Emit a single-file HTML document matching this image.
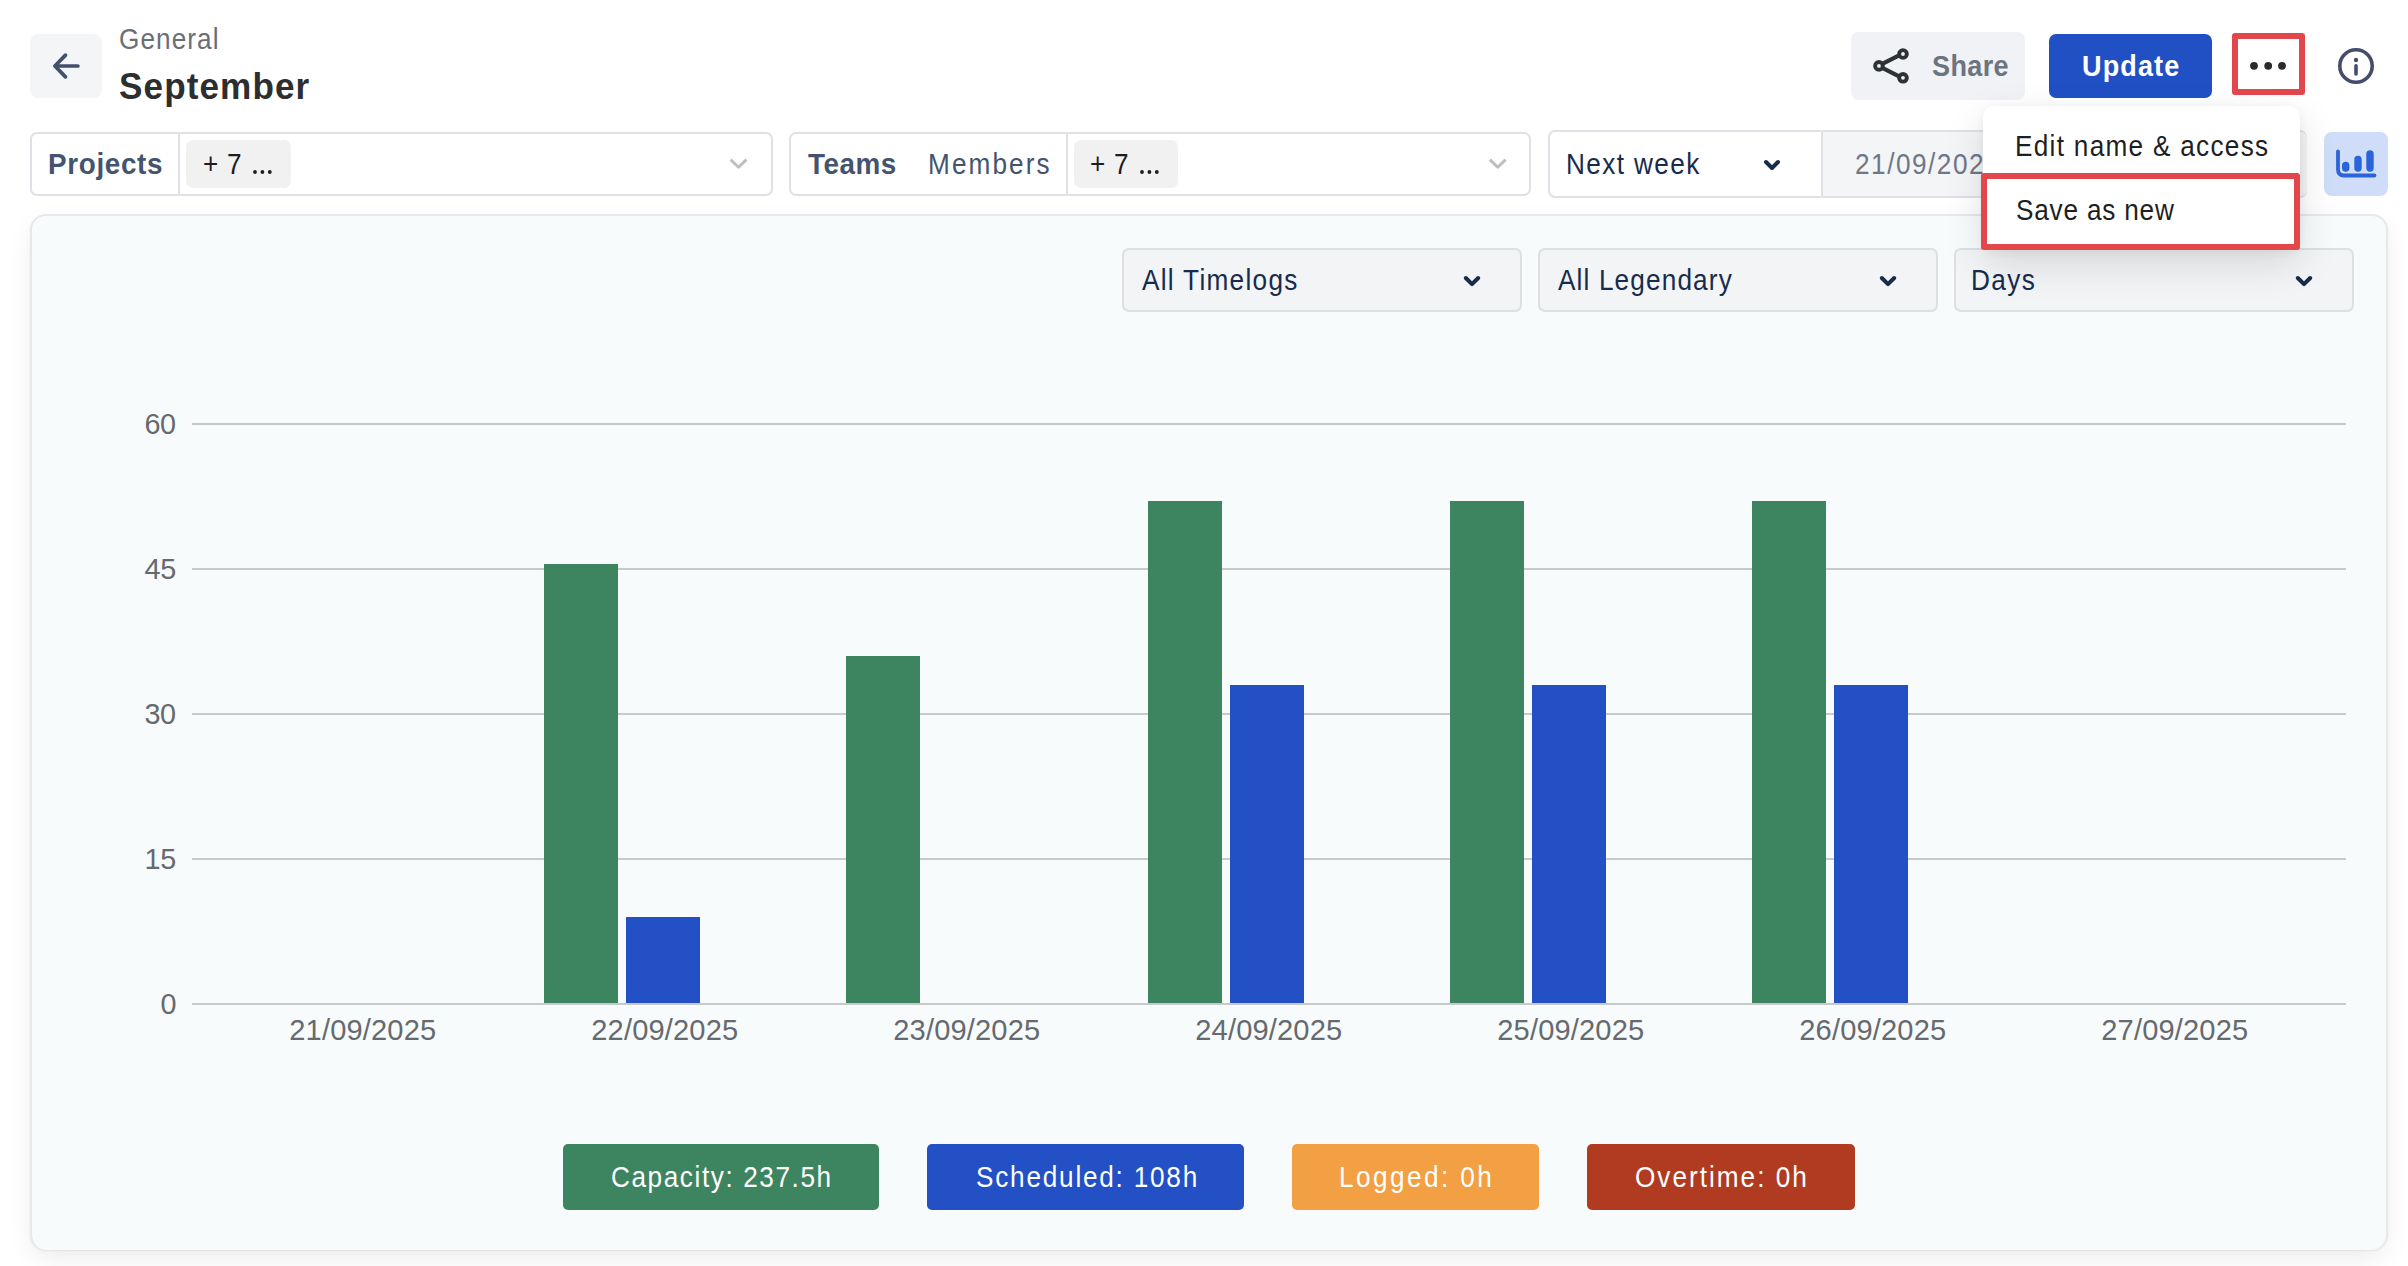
<!DOCTYPE html>
<html><head><meta charset="utf-8"><style>
html,body{margin:0;padding:0;}
body{width:2408px;height:1266px;overflow:hidden;background:#fff;position:relative;font-family:"Liberation Sans",sans-serif;}
.b{position:absolute;}
.t{position:absolute;line-height:1;white-space:pre;}
</style></head><body>
<div class="b" style="left:30px;top:34px;width:72px;height:64px;background:#F4F5F7;border-radius:8px;"></div>
<svg class="b" style="left:0;top:0" width="200" height="120"><path d="M77.9 66H56 M65.5 55.1L54.9 66L65.5 76.9" fill="none" stroke="#434F6E" stroke-width="3.7" stroke-linecap="round" stroke-linejoin="round"/></svg>
<div class="t" style="left:118.55px;top:24.59px;font-size:29.07px;letter-spacing:1.185px;color:#6B6E76;font-weight:400;transform:scaleX(0.9);transform-origin:0 0;">General</div>
<div class="t" style="left:118.88px;top:68.30px;font-size:37.79px;letter-spacing:1.163px;color:#2D2E30;font-weight:700;transform:scaleX(0.93);transform-origin:0 0;">September</div>
<div class="b" style="left:30px;top:132px;width:743px;height:64px;border:2px solid #DFE1E6;border-radius:7px;background:#fff;box-sizing:border-box;"></div>
<div class="b" style="left:178px;top:134px;width:2px;height:60px;background:#DFE1E6;"></div>
<div class="b" style="left:186px;top:140px;width:105px;height:48px;background:#F1F1F2;border-radius:7px;"></div>
<div class="t" style="left:47.64px;top:149.45px;font-size:29.94px;letter-spacing:0.713px;color:#44546F;font-weight:700;transform:scaleX(0.93);transform-origin:0 0;">Projects</div>
<div class="t" style="left:202.74px;top:149.99px;font-size:29.07px;letter-spacing:0.000px;color:#1D1D1F;font-weight:400;transform:scaleX(0.9);transform-origin:0 0;">+</div>
<div class="t" style="left:226.85px;top:149.99px;font-size:29.07px;letter-spacing:0.000px;color:#1D1D1F;font-weight:400;transform:scaleX(0.9);transform-origin:0 0;">7</div>
<svg class="b" style="left:250.1px;top:166.6px" width="30" height="10"><g fill="#1D1D1F"><circle cx="5" cy="5" r="1.9"/><circle cx="12.4" cy="5" r="1.9"/><circle cx="19.8" cy="5" r="1.9"/></g></svg>
<svg class="b" style="left:720px;top:150px" width="36" height="26"><path d="M10.6 9.6L18.5 17.2L26.4 9.6" fill="none" stroke="#BDBEC0" stroke-width="2.9" stroke-linecap="butt" stroke-linejoin="round"/></svg>
<div class="b" style="left:789px;top:132px;width:742px;height:64px;border:2px solid #DFE1E6;border-radius:7px;background:#fff;box-sizing:border-box;"></div>
<div class="b" style="left:1066px;top:134px;width:2px;height:60px;background:#DFE1E6;"></div>
<div class="b" style="left:1074px;top:140px;width:104px;height:48px;background:#F1F1F2;border-radius:7px;"></div>
<div class="t" style="left:808.42px;top:149.45px;font-size:29.94px;letter-spacing:0.585px;color:#44546F;font-weight:700;transform:scaleX(0.93);transform-origin:0 0;">Teams</div>
<div class="t" style="left:927.74px;top:150.19px;font-size:29.07px;letter-spacing:2.346px;color:#44546F;font-weight:400;transform:scaleX(0.9);transform-origin:0 0;">Members</div>
<div class="t" style="left:1089.94px;top:149.99px;font-size:29.07px;letter-spacing:0.000px;color:#1D1D1F;font-weight:400;transform:scaleX(0.9);transform-origin:0 0;">+</div>
<div class="t" style="left:1114.05px;top:149.99px;font-size:29.07px;letter-spacing:0.000px;color:#1D1D1F;font-weight:400;transform:scaleX(0.9);transform-origin:0 0;">7</div>
<svg class="b" style="left:1137.3px;top:166.6px" width="30" height="10"><g fill="#1D1D1F"><circle cx="5" cy="5" r="1.9"/><circle cx="12.4" cy="5" r="1.9"/><circle cx="19.8" cy="5" r="1.9"/></g></svg>
<svg class="b" style="left:1480px;top:150px" width="36" height="26"><path d="M9.8 9.6L17.7 17.2L25.6 9.6" fill="none" stroke="#BDBEC0" stroke-width="2.9" stroke-linecap="butt" stroke-linejoin="round"/></svg>
<div class="b" style="left:1548px;top:130px;width:759px;height:68px;border:2px solid #DFE1E6;border-radius:7px;background:#fff;box-sizing:border-box;overflow:hidden;"></div>
<div class="b" style="left:1821px;top:132px;width:484px;height:64px;background:#F4F5F7;border-left:2px solid #DFE1E6;border-radius:0 6px 6px 0;"></div>
<div class="t" style="left:1566.04px;top:149.99px;font-size:29.07px;letter-spacing:1.547px;color:#172B4D;font-weight:400;transform:scaleX(0.9);transform-origin:0 0;">Next week</div>
<svg class="b" style="left:1755px;top:150px" width="36" height="26"><path d="M11 12L17 18L23 12" fill="none" stroke="#172B4D" stroke-width="4" stroke-linecap="round" stroke-linejoin="round"/></svg>
<div class="t" style="left:1854.85px;top:149.99px;font-size:29.07px;letter-spacing:1.686px;color:#6E7789;font-weight:400;transform:scaleX(0.9);transform-origin:0 0;">21/09/2025 - 27/09/2025</div>
<div class="b" style="left:2324px;top:132px;width:64px;height:64px;background:#CFDDF8;border-radius:8px;"></div>
<svg class="b" style="left:2324px;top:132px" width="64" height="64"><path d="M14 19.5V37.5Q14 43.5 20 43.5H50.5" fill="none" stroke="#2B63D9" stroke-width="3.8" stroke-linecap="round" stroke-linejoin="round"/><path d="M21.7 33.5V36 M34 27.5V36 M46 22V36" fill="none" stroke="#2B63D9" stroke-width="7.4" stroke-linecap="round"/></svg>
<div class="b" style="left:1851px;top:32px;width:174px;height:68px;background:#F0F2F5;border-radius:8px;"></div>
<svg class="b" style="left:1860px;top:40px" width="60" height="52"><g fill="none" stroke="#2F3235"><g stroke-width="3.9"><circle cx="43" cy="14" r="3.85"/><circle cx="18.95" cy="25.9" r="3.85"/><circle cx="43" cy="37.8" r="3.85"/></g><path stroke-width="4.1" d="M22.3 23.9L39.6 15.1 M22.3 27.9L39.6 36.6"/></g></svg>
<div class="t" style="left:1932.36px;top:52.19px;font-size:29.07px;letter-spacing:0.411px;color:#6C747F;font-weight:700;transform:scaleX(0.93);transform-origin:0 0;">Share</div>
<div class="b" style="left:2049px;top:34px;width:163px;height:64px;background:#2150C4;border-radius:7px;"></div>
<div class="t" style="left:2082.22px;top:51.79px;font-size:29.07px;letter-spacing:1.207px;color:#FFFFFF;font-weight:700;transform:scaleX(0.93);transform-origin:0 0;">Update</div>
<div class="b" style="left:2232px;top:33px;width:73px;height:62px;border:6px solid #E2474C;border-radius:3px;box-sizing:border-box;background:#fff;"></div>
<svg class="b" style="left:2240px;top:50px" width="60" height="32"><g fill="#2A2B2D"><circle cx="14" cy="15.8" r="3.9"/><circle cx="28.2" cy="15.8" r="3.9"/><circle cx="42" cy="15.8" r="3.9"/></g></svg>
<svg class="b" style="left:2330px;top:40px" width="52" height="52"><circle cx="26" cy="26" r="16.2" fill="none" stroke="#434D6D" stroke-width="3.6"/><circle cx="26" cy="20" r="2.2" fill="#434D6D"/><path d="M26 25.8V34" stroke="#434D6D" stroke-width="3.6" stroke-linecap="round"/></svg>
<div class="b" style="left:30px;top:214px;width:2358px;height:1036px;background:#F8FBFC;border:2px solid #E6E8E9;border-bottom:0;border-radius:16px;box-sizing:border-box;box-shadow:0 1px 2px rgba(0,0,0,0.07),0 10px 28px -4px rgba(30,0,10,0.09);"></div>
<div class="b" style="left:1122px;top:248px;width:400px;height:64px;background:#F2F4F6;border:2px solid #DCDFE3;border-radius:7px;box-sizing:border-box;"></div>
<div class="t" style="left:1141.51px;top:265.79px;font-size:29.07px;letter-spacing:1.451px;color:#172B4D;font-weight:400;transform:scaleX(0.9);transform-origin:0 0;">All Timelogs</div>
<svg class="b" style="left:1455.75px;top:268px" width="32" height="26"><path d="M9.8 10L16 16.2L22.2 10" fill="none" stroke="#172B4D" stroke-width="4" stroke-linecap="round" stroke-linejoin="round"/></svg>
<div class="b" style="left:1538px;top:248px;width:400px;height:64px;background:#F2F4F6;border:2px solid #DCDFE3;border-radius:7px;box-sizing:border-box;"></div>
<div class="t" style="left:1557.51px;top:265.79px;font-size:29.07px;letter-spacing:1.274px;color:#172B4D;font-weight:400;transform:scaleX(0.9);transform-origin:0 0;">All Legendary</div>
<svg class="b" style="left:1871.75px;top:268px" width="32" height="26"><path d="M9.8 10L16 16.2L22.2 10" fill="none" stroke="#172B4D" stroke-width="4" stroke-linecap="round" stroke-linejoin="round"/></svg>
<div class="b" style="left:1954px;top:248px;width:400px;height:64px;background:#F2F4F6;border:2px solid #DCDFE3;border-radius:7px;box-sizing:border-box;"></div>
<div class="t" style="left:1971.44px;top:265.79px;font-size:29.07px;letter-spacing:1.548px;color:#172B4D;font-weight:400;transform:scaleX(0.9);transform-origin:0 0;">Days</div>
<svg class="b" style="left:2287.75px;top:268px" width="32" height="26"><path d="M9.8 10L16 16.2L22.2 10" fill="none" stroke="#172B4D" stroke-width="4" stroke-linecap="round" stroke-linejoin="round"/></svg>
<div class="b" style="left:192px;top:423px;width:2154px;height:2px;background:#C7C9CB;"></div>
<div class="t" style="left:144.50px;top:410.43px;font-size:28.78px;letter-spacing:-0.400px;color:#666A6E;font-weight:400;">60</div>
<div class="b" style="left:192px;top:568px;width:2154px;height:2px;background:#C7C9CB;"></div>
<div class="t" style="left:144.60px;top:555.43px;font-size:28.78px;letter-spacing:-0.400px;color:#666A6E;font-weight:400;">45</div>
<div class="b" style="left:192px;top:713px;width:2154px;height:2px;background:#C7C9CB;"></div>
<div class="t" style="left:144.50px;top:700.43px;font-size:28.78px;letter-spacing:-0.400px;color:#666A6E;font-weight:400;">30</div>
<div class="b" style="left:192px;top:858px;width:2154px;height:2px;background:#C7C9CB;"></div>
<div class="t" style="left:144.60px;top:845.43px;font-size:28.78px;letter-spacing:-0.400px;color:#666A6E;font-weight:400;">15</div>
<div class="b" style="left:192px;top:1003px;width:2154px;height:2px;background:#C7C9CB;"></div>
<div class="t" style="left:160.50px;top:990.43px;font-size:28.78px;letter-spacing:0.000px;color:#666A6E;font-weight:400;">0</div>
<div class="t" style="left:289.30px;top:1016.19px;font-size:29.07px;letter-spacing:0.156px;color:#666A6E;font-weight:400;">21/09/2025</div>
<div class="t" style="left:591.30px;top:1016.19px;font-size:29.07px;letter-spacing:0.156px;color:#666A6E;font-weight:400;">22/09/2025</div>
<div class="t" style="left:893.30px;top:1016.19px;font-size:29.07px;letter-spacing:0.156px;color:#666A6E;font-weight:400;">23/09/2025</div>
<div class="t" style="left:1195.30px;top:1016.19px;font-size:29.07px;letter-spacing:0.156px;color:#666A6E;font-weight:400;">24/09/2025</div>
<div class="t" style="left:1497.30px;top:1016.19px;font-size:29.07px;letter-spacing:0.156px;color:#666A6E;font-weight:400;">25/09/2025</div>
<div class="t" style="left:1799.30px;top:1016.19px;font-size:29.07px;letter-spacing:0.156px;color:#666A6E;font-weight:400;">26/09/2025</div>
<div class="t" style="left:2101.30px;top:1016.19px;font-size:29.07px;letter-spacing:0.156px;color:#666A6E;font-weight:400;">27/09/2025</div>
<div class="b" style="left:544px;top:564px;width:74px;height:439px;background:#3D8560;"></div>
<div class="b" style="left:626px;top:917px;width:74px;height:86px;background:#2350C4;"></div>
<div class="b" style="left:846px;top:656px;width:74px;height:347px;background:#3D8560;"></div>
<div class="b" style="left:1148px;top:501px;width:74px;height:502px;background:#3D8560;"></div>
<div class="b" style="left:1230px;top:685px;width:74px;height:318px;background:#2350C4;"></div>
<div class="b" style="left:1450px;top:501px;width:74px;height:502px;background:#3D8560;"></div>
<div class="b" style="left:1532px;top:685px;width:74px;height:318px;background:#2350C4;"></div>
<div class="b" style="left:1752px;top:501px;width:74px;height:502px;background:#3D8560;"></div>
<div class="b" style="left:1834px;top:685px;width:74px;height:318px;background:#2350C4;"></div>
<div class="b" style="left:563px;top:1144px;width:316px;height:66px;background:#3D8560;border-radius:5px;"></div>
<div class="t" style="left:611.35px;top:1162.69px;font-size:29.07px;letter-spacing:1.761px;color:#FFFFFF;font-weight:400;transform:scaleX(0.9);transform-origin:0 0;white-space:pre;">Capacity: 237.5h</div>
<div class="b" style="left:927px;top:1144px;width:317px;height:66px;background:#2350C4;border-radius:5px;"></div>
<div class="t" style="left:975.73px;top:1162.69px;font-size:29.07px;letter-spacing:1.976px;color:#FFFFFF;font-weight:400;transform:scaleX(0.9);transform-origin:0 0;white-space:pre;">Scheduled: 108h</div>
<div class="b" style="left:1292px;top:1144px;width:247px;height:66px;background:#F2A043;border-radius:5px;"></div>
<div class="t" style="left:1339.04px;top:1162.69px;font-size:29.07px;letter-spacing:2.706px;color:#FFFFFF;font-weight:400;transform:scaleX(0.9);transform-origin:0 0;white-space:pre;">Logged: 0h</div>
<div class="b" style="left:1587px;top:1144px;width:268px;height:66px;background:#B03B21;border-radius:5px;"></div>
<div class="t" style="left:1635.24px;top:1162.69px;font-size:29.07px;letter-spacing:2.233px;color:#FFFFFF;font-weight:400;transform:scaleX(0.9);transform-origin:0 0;white-space:pre;">Overtime: 0h</div>
<div class="b" style="left:1983px;top:106px;width:317px;height:144px;background:#fff;border-radius:10px;box-shadow:0 14px 40px rgba(0,0,0,0.12),0 2px 8px rgba(0,0,0,0.06);"></div>
<div class="t" style="left:2014.54px;top:131.99px;font-size:29.07px;letter-spacing:1.435px;color:#1E1F21;font-weight:400;transform:scaleX(0.9);transform-origin:0 0;">Edit name &amp; access</div>
<div class="b" style="left:1981px;top:173px;width:319px;height:77px;border:6px solid #E2474C;border-radius:3px;box-sizing:border-box;background:#fff;"></div>
<div class="t" style="left:2015.53px;top:195.79px;font-size:29.07px;letter-spacing:0.891px;color:#1E1F21;font-weight:400;transform:scaleX(0.9);transform-origin:0 0;">Save as new</div>
</body></html>
